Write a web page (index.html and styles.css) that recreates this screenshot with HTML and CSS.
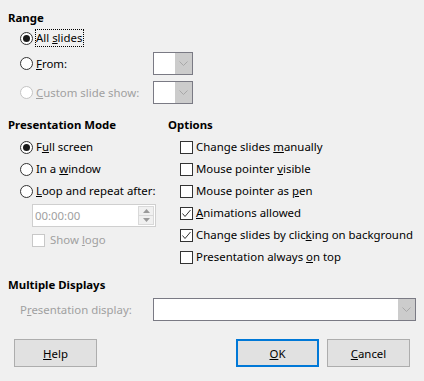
FILE: index.html
```html
<!DOCTYPE html>
<html>
<head>
<meta charset="utf-8">
<link rel="stylesheet" href="styles.css">
</head>
<body>
<div class="dialog">
  <div class="h">Range</div>
  <div class="range">
    <div class="row r1">
      <span class="radio on"></span><span class="lbl focus">All <u>s</u>lides</span>
    </div>
    <div class="row r2">
      <div class="lw"><span class="radio"></span><span class="lbl"><u>F</u>rom:</span></div>
      <div class="combo small"><span class="field"></span><span class="btn"><svg width="9" height="5" viewBox="0 0 9 5"><polyline points="0.5,0.5 4.5,4.5 8.5,0.5" fill="none" stroke="#a8a8a8" stroke-width="1"/></svg></span></div>
    </div>
    <div class="row r3">
      <div class="lw"><span class="radio dis"></span><span class="lbl dtext"><u>C</u>ustom slide show:</span></div>
      <div class="combo small"><span class="field"></span><span class="btn"><svg width="9" height="5" viewBox="0 0 9 5"><polyline points="0.5,0.5 4.5,4.5 8.5,0.5" fill="none" stroke="#a8a8a8" stroke-width="1"/></svg></span></div>
    </div>
  </div>

  <div class="cols">
    <div class="left">
      <div class="h">Presentation Mode</div>
      <div class="list">
        <div class="row"><span class="radio on"></span><span class="lbl">F<u>u</u>ll screen</span></div>
        <div class="row"><span class="radio"></span><span class="lbl">In a <u>w</u>indow</span></div>
        <div class="row"><span class="radio"></span><span class="lbl"><u>L</u>oop and repeat after:</span></div>
      </div>
      <div class="spin">
        <span class="stext">00:00:00</span>
        <span class="sbtns">
          <span class="sb"><svg width="7" height="4" viewBox="0 0 7 4"><polygon points="0,4 3.5,0 7,4" fill="#9a9a9a"/></svg></span>
          <span class="sb"><svg width="7" height="4" viewBox="0 0 7 4"><polygon points="0,0 3.5,4 7,0" fill="#9a9a9a"/></svg></span>
        </span>
      </div>
      <div class="row logo"><span class="check dis"></span><span class="lbl dtext">Show <u>l</u>ogo</span></div>
    </div>
    <div class="right">
      <div class="h">Options</div>
      <div class="list">
        <div class="row"><span class="check"></span><span class="lbl">Change slides <u>m</u>anually</span></div>
        <div class="row"><span class="check"></span><span class="lbl">Mouse pointer <u>v</u>isible</span></div>
        <div class="row"><span class="check"></span><span class="lbl">Mouse pointer as <u>p</u>en</span></div>
        <div class="row"><span class="check"><svg width="11" height="11" viewBox="0 0 11 11"><polyline points="1.5,5.5 4,8.5 9.5,2" fill="none" stroke="#333" stroke-width="1"/></svg></span><span class="lbl"><u>A</u>nimations allowed</span></div>
        <div class="row"><span class="check"><svg width="11" height="11" viewBox="0 0 11 11"><polyline points="1.5,5.5 4,8.5 9.5,2" fill="none" stroke="#333" stroke-width="1"/></svg></span><span class="lbl">Change slides by clic<u>k</u>ing on background</span></div>
        <div class="row"><span class="check"></span><span class="lbl">Presentation always <u>o</u>n top</span></div>
      </div>
    </div>
  </div>

  <div class="h md">Multiple Displays</div>
  <div class="row disp">
    <span class="dlbl dtext">P<u>r</u>esentation display:</span>
    <div class="combo wide"><span class="field"></span><span class="btn"><svg width="9" height="5" viewBox="0 0 9 5"><polyline points="0.5,0.5 4.5,4.5 8.5,0.5" fill="none" stroke="#a8a8a8" stroke-width="1"/></svg></span></div>
  </div>

  <div class="buttons">
    <button class="b help"><u>H</u>elp</button>
    <span class="spacer"></span>
    <button class="b ok"><u>O</u>K</button>
    <button class="b"><u>C</u>ancel</button>
  </div>
</div>
</body>
</html>
```

FILE: styles.css
```css
html, body {
  margin: 0;
  padding: 0;
  background: #f0f0f0;
}
body {
  width: 424px;
  height: 381px;
  overflow: hidden;
  font-family: "Noto Sans", "Open Sans", sans-serif;
  font-size: 11.4px;
  color: #000;
}
.dialog {
  padding: 10px 14px 0 8px;
}
.h {
  font-weight: bold;
  height: 16px;
  line-height: 16px;
}
.row {
  display: flex;
  align-items: center;
  height: 22px;
}
.range {
  padding-left: 12px;
  margin-top: 1px;
}
.range .r2 { margin-top: 3px; height: 23px; }
.range .r3 { margin-top: 6px; height: 23px; }
.lw {
  display: flex;
  align-items: center;
  width: 133px;
  flex: none;
}
.lbl {
  margin-left: 3px;
  white-space: nowrap;
  line-height: 16px;
}
.focus {
  outline: 1px dotted #000;
  outline-offset: 0;
  padding: 0 1px 0 0;
}
.dtext { color: #a0a0a0; }
.radio {
  width: 13px;
  height: 13px;
  box-sizing: border-box;
  border: 1px solid #333;
  border-radius: 50%;
  background: #fff;
  display: flex;
  align-items: center;
  justify-content: center;
  flex: none;
}
.radio.on::after {
  content: "";
  width: 7px;
  height: 7px;
  border-radius: 50%;
  background: #1a1a1a;
}
.radio.dis { border-color: #c4c4c4; }
.check {
  width: 13px;
  height: 13px;
  box-sizing: border-box;
  border: 1px solid #333;
  background: #fff;
  display: flex;
  align-items: center;
  justify-content: center;
  flex: none;
}
.check.dis { border-color: #c8c8c8; }
.combo {
  display: flex;
  box-sizing: border-box;
  height: 23px;
  border: 1px solid #7a7a84;
  background: #fff;
  flex: none;
}
.combo .field { flex: 1; }
.combo .btn {
  width: 17px;
  background: #cccccc;
  display: flex;
  align-items: center;
  justify-content: center;
}
.combo.small { width: 40px; }
.combo.wide { width: 263px; }
.cols {
  display: flex;
  margin-top: 13px;
}
.left { width: 160px; flex: none; }
.right { flex: none; }
.left .list { margin-left: 12px; }
.list { margin-top: 3px; }
.right .list { margin-left: 12px; }
.spin {
  margin-top: 2px;
  margin-left: 24px;
  width: 124px;
  height: 23px;
  box-sizing: border-box;
  border: 1px solid #cfcfcf;
  background: #fff;
  display: flex;
  align-items: center;
}
.stext {
  flex: 1;
  color: #a0a0a0;
  padding-left: 2px;
}
.sbtns {
  width: 16px;
  height: 19px;
  margin-right: 1px;
  display: flex;
  flex-direction: column;
}
.sb {
  flex: 1;
  background: #f0f0f0;
  border: 1px solid #d9d9d9;
  display: flex;
  align-items: center;
  justify-content: center;
}
.sb + .sb { border-top: none; }
.logo {
  margin-left: 24px;
  margin-top: 2px;
}
.logo .lbl { margin-left: 5px; }
.md { margin-top: 9px; }
.disp {
  margin-top: 5px;
  height: 23px;
  padding-left: 12px;
}
.dlbl {
  width: 133px;
  flex: none;
  white-space: nowrap;
}
.buttons {
  display: flex;
  margin-top: 18px;
  padding-left: 6px;
  gap: 8px;
}
.spacer { flex: 1; }
.b {
  width: 83px;
  height: 28px;
  box-sizing: border-box;
  border: 1px solid #adadad;
  background: #e1e1e1;
  font: inherit;
  color: #000;
  padding: 0;
  margin: 0;
}
.b.ok { border: 2px solid #0078d7; }
```
